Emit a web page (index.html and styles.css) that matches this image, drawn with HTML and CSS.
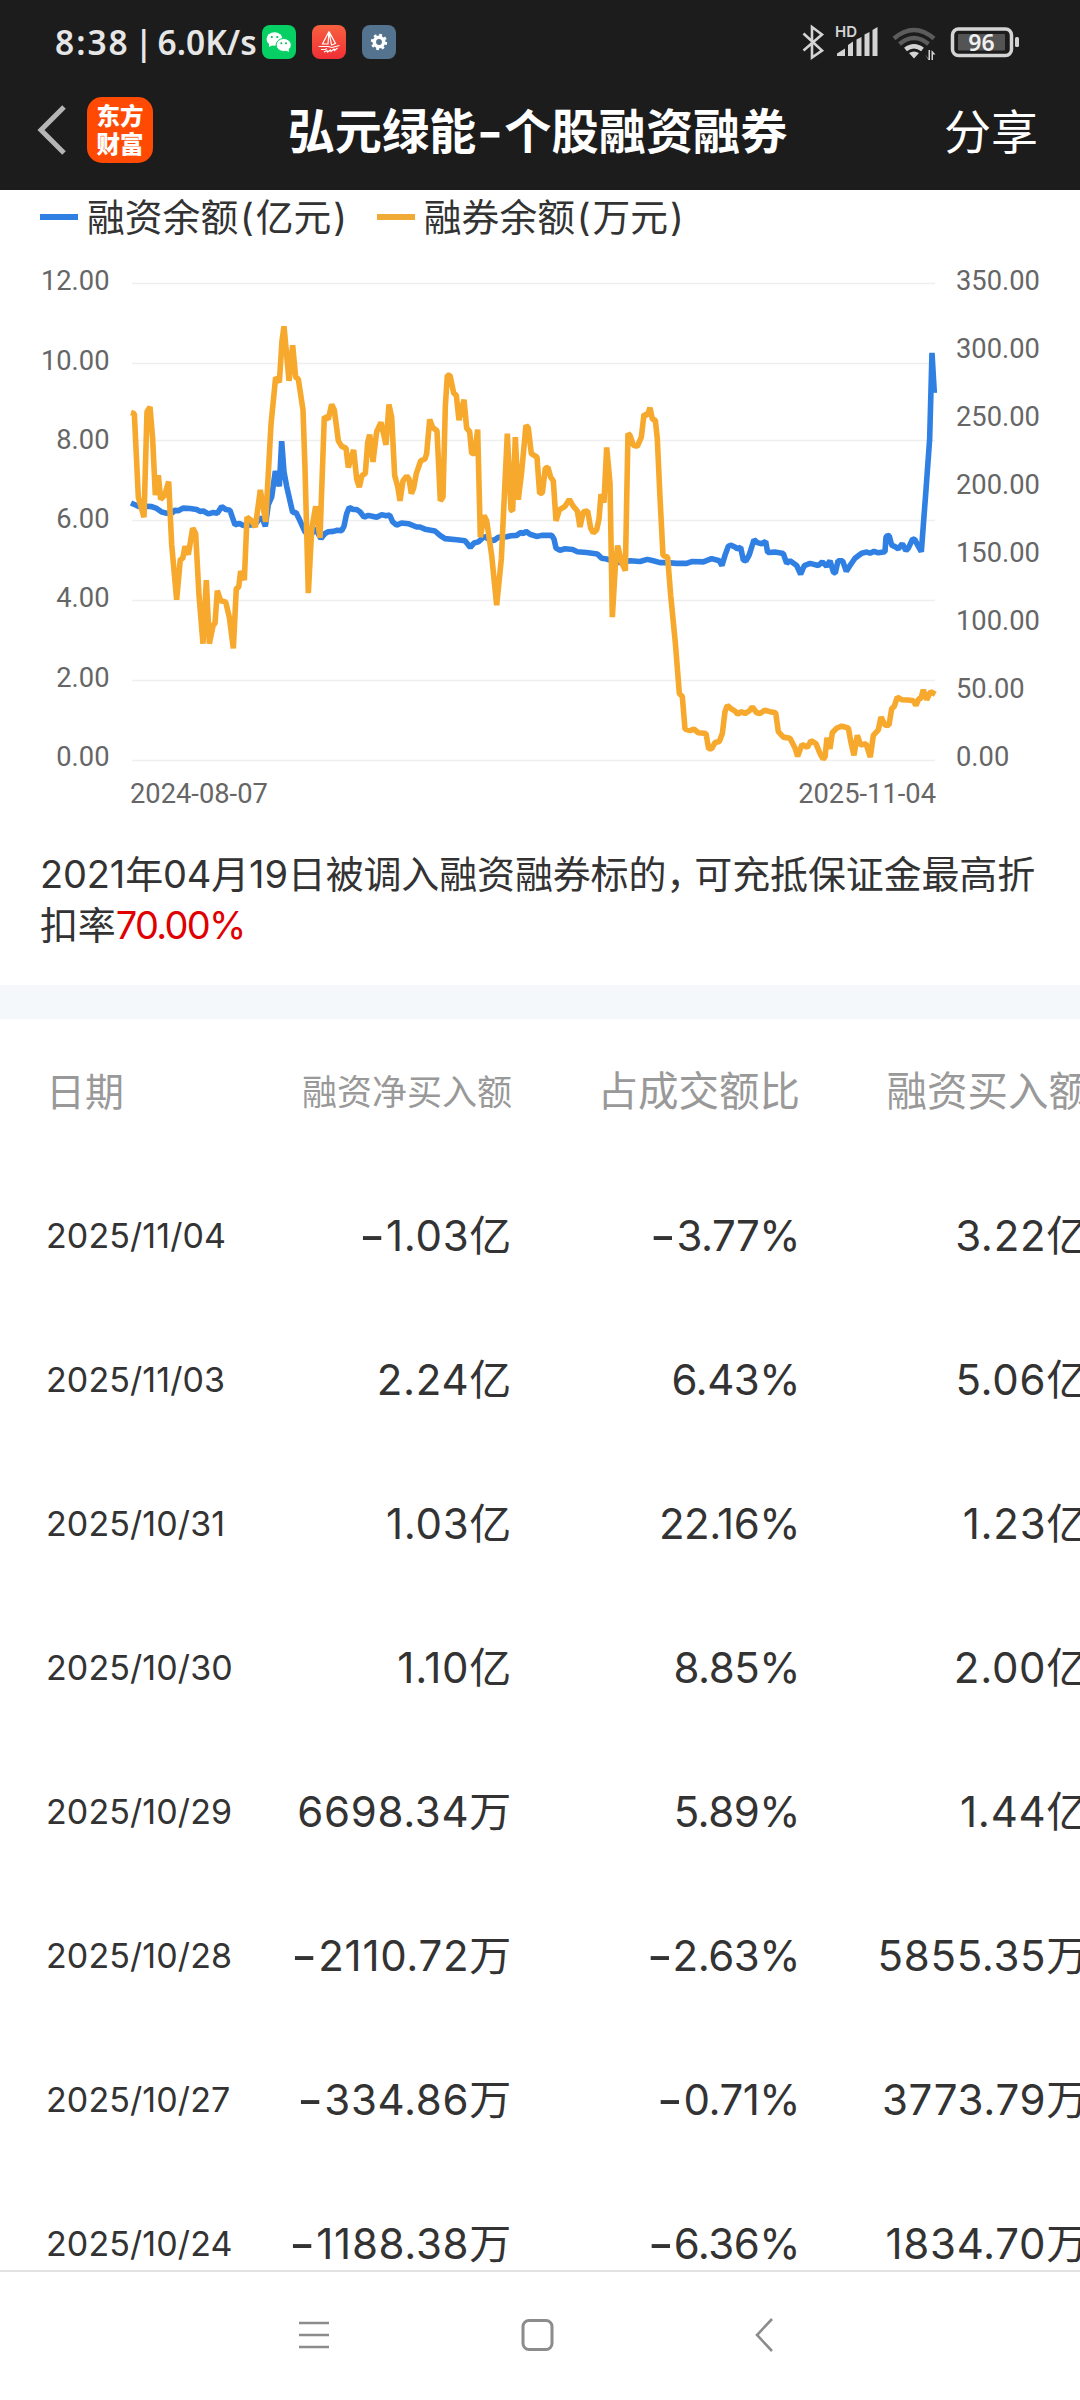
FILE: index.html
```html
<!DOCTYPE html>
<html lang="zh-CN">
<head>
<meta charset="utf-8">
<title>弘元绿能-个股融资融券</title>
<link rel="stylesheet" href="styles.css">
</head>
<body>
<div class="screen">
  <header class="top">
    <div class="status">
      <span class="clock"><span class="time">8:38</span> | 6.0K/s</span>
      <div class="apps">
        <svg class="app" viewBox="0 0 34 34"><rect width="34" height="34" rx="8" fill="#06cf63"/><ellipse cx="12.5" cy="14" rx="8" ry="6.8" fill="#fff"/><path d="M7 18l0 4 4-2z" fill="#fff"/><ellipse cx="21.7" cy="20" rx="7.6" ry="6.5" fill="#fff" stroke="#06cf63" stroke-width="1"/><path d="M23 25l4 2-.5-3.500z" fill="#fff"/><g fill="#06b858"><circle cx="9.800" cy="12" r="1.100"/><circle cx="15.300" cy="12" r="1.100"/><circle cx="19.300" cy="18.200" r="1"/><circle cx="24" cy="18.200" r="1"/></g></svg>
        <svg class="app" viewBox="0 0 34 34"><defs><linearGradient id="sail" x2="0" y2="1"><stop stop-color="#f7613f"/><stop offset="1" stop-color="#f02f36"/></linearGradient></defs><rect width="34" height="34" rx="8" fill="url(#sail)"/><path d="M17 6.500L10.500 19H16zM17 6.500L23.500 18.500 19.500 20zM6.500 21.500H16L20 22.500 27.500 20.500M9 24.500h4l2-1M12 27l3-1.500.5 1.500 3-2 .5 1.500 3-2.500.5 1.500 3-2.500" fill="none" stroke="#fff" stroke-width="1.200"/></svg>
        <svg class="app" viewBox="0 0 34 34"><rect width="34" height="34" rx="8" fill="#54738f"/><circle cx="17" cy="17" r="4.700" fill="none" stroke="#fff" stroke-width="3.600"/><circle cx="17" cy="17" r="7" fill="none" stroke="#fff" stroke-width="2.400" stroke-dasharray="2.750 2.750"/></svg>
      </div>
      <svg class="signals" viewBox="800 20 222 44">
        <path d="M803.500 33.500L822 50.500 812 57.500V27L822 34.500 803.500 50.500" fill="none" stroke="#d4d4d4" stroke-width="2.600"/>
        <text class="hd" x="835" y="37">HD</text>
        <path d="M837 56v-2.500l8-5V56zM848 56V45l5-3.500V56zM856.500 56V39.500l5-2.500v19zM864.500 56V34.500l5-2.500v24zM872.500 56V30l5-3v29z" fill="#d4d4d4"/>
        <g fill="none" stroke-width="4.500"><path d="M894 38.500q20-17 40 0" stroke="#5c5c5c"/><path d="M899.500 44q14.500-12 29 0" stroke="#5c5c5c"/><path d="M905.500 49.500q8.500-6.500 17 0" stroke="#d4d4d4"/></g>
        <path d="M909 53q5-3 10 0l-5 5.500zM925 54l3.500 5V50h1.500v10h-1.500zM931.500 60V50l4 4.500h-2.500V60z" fill="#d4d4d4"/>
        <rect x="952.500" y="29" width="59" height="26.500" rx="6" fill="none" stroke="#d4d4d4" stroke-width="3.500"/>
        <rect x="958" y="34" width="47" height="16.500" rx="1" fill="#545454"/>
        <rect x="1015" y="37" width="4" height="10" rx="1.500" fill="#d4d4d4"/>
        <text class="level" x="981.500" y="51" text-anchor="middle">96</text>
      </svg>
    </div>
    <div class="bar">
      <div class="lead">
        <svg class="back" viewBox="0 0 30 52"><path d="M27 3L4 26l23 23" fill="none" stroke="#b5b5b5" stroke-width="5"/></svg>
        <div class="brand">东方<br>财富</div>
      </div>
      <h1 class="title">弘元绿能<span class="dash">-</span>个股融资融券</h1>
      <span class="share">分享</span>
    </div>
  </header>

  <div class="legend">
    <i class="key blue"></i><span class="name">融资余额<span class="paren">(</span>亿元<span class="paren">)</span></span>
    <i class="key amber"></i><span class="name">融券余额<span class="paren">(</span>万元<span class="paren">)</span></span>
  </div>

  <svg class="chart" viewBox="0 250 1080 570">
    <path d="M132 283.500H935M132 363.500H935M132 440.500H935M132 520.500H935M132 600.500H935M132 680.500H935M132 760.500H935" stroke="#efefef" stroke-width="1.400"/>
    <g class="axis" text-anchor="end">
      <text x="109.500" y="290">12.00</text><text x="109.500" y="370">10.00</text><text x="109.500" y="449">8.00</text><text x="109.500" y="528">6.00</text><text x="109.500" y="607">4.00</text><text x="109.500" y="687">2.00</text><text x="109.500" y="766">0.00</text>
      <text x="936" y="803">2025-11-04</text>
    </g>
    <g class="axis">
      <text x="956" y="290">350.00</text><text x="956" y="358">300.00</text><text x="956" y="426">250.00</text><text x="956" y="494">200.00</text><text x="956" y="562">150.00</text><text x="956" y="630">100.00</text><text x="956" y="698">50.00</text><text x="956" y="766">0.00</text>
      <text x="130" y="803">2024-08-07</text>
    </g>
    <g class="series" transform="translate(0 250) scale(.33333 .36352)">
      <polyline stroke="#3080e4" points="393,696 410,703 425,708 440,705 455,706 470,711 485,721 500,724 520,722 522,716 535,717 550,710 570,711 590,714 600,719 610,718 625,726 640,722 652,724 665,706 678,714 690,716 697,735 705,756 718,752 730,758 745,757 765,755 780,738 788,740 796,760 805,700 815,680 826,608 838,650 845,526 852,610 860,650 870,690 878,722 888,722 900,745 915,775 930,790 945,765 963,794 975,780 985,775 1000,774 1012,771 1025,772 1032,760 1040,725 1048,708 1060,714 1070,714 1080,720 1092,735 1105,730 1120,733 1130,735 1145,728 1158,731 1169,729 1178,748 1190,757 1205,751 1225,753 1250,762 1260,762 1275,768 1305,773 1320,785 1335,794 1370,797 1395,800 1411,818 1422,806 1435,803 1453,788 1470,797 1482,799 1495,790 1520,789 1533,786 1550,785 1562,777 1570,780 1578,774 1590,782 1610,788 1625,785 1655,785 1662,795 1668,820 1680,826 1695,822 1718,824 1732,830 1760,832 1792,836 1805,848 1820,850 1840,856 1860,860 1890,855 1920,857 1942,851 1960,855 1980,860 2000,860 2030,862 2060,862 2075,857 2110,858 2135,849 2158,855 2166,868 2175,840 2185,815 2192,812 2205,817 2212,822 2222,818 2230,853 2238,855 2248,838 2262,797 2272,805 2285,808 2297,802 2303,832 2325,831 2350,835 2360,862 2370,855 2390,868 2402,892 2413,868 2430,862 2455,868 2467,858 2480,870 2490,855 2501,888 2506,888 2514,855 2528,855 2539,884 2550,868 2565,848 2585,834 2600,831 2610,834 2622,829 2635,833 2655,830 2658,790 2663,785 2668,787 2675,812 2685,816 2695,822 2707,808 2718,827 2725,820 2738,795 2745,797 2753,812 2764,830 2778,660 2789,520 2796,283 2803,393"/>
      <polyline stroke="#f7a92e" points="393,447 403,450 415,680 432,735 441,445 450,432 458,520 466,674 475,620 482,686 494,675 506,637 515,810 530,962 541,850 548,850 555,815 565,838 578,765 587,780 597,950 609,1083 619,908 628,1083 640,1030 645,1028 652,937 662,965 677,968 688,1010 700,1096 709,930 716,928 722,883 733,908 741,735 755,745 766,762 781,660 797,748 813,480 827,350 838,364 846,250 852,210 867,360 878,262 887,350 895,355 909,440 915,600 925,944 935,770 947,705 960,792 973,458 985,465 995,425 1003,440 1015,525 1025,540 1038,545 1045,598 1061,550 1070,630 1078,652 1086,620 1096,615 1103,530 1109,508 1119,583 1130,500 1143,474 1158,536 1167,425 1175,460 1184,620 1193,650 1200,690 1209,635 1220,622 1227,630 1234,670 1241,655 1249,615 1262,580 1275,575 1280,560 1289,466 1298,488 1311,497 1321,690 1329,680 1336,430 1342,345 1350,345 1361,393 1369,400 1377,468 1392,412 1400,490 1409,500 1415,560 1424,560 1433,494 1441,790 1452,730 1460,745 1475,840 1490,977 1504,850 1522,505 1533,715 1538,718 1546,515 1555,687 1565,610 1578,482 1585,490 1594,560 1611,570 1619,670 1627,668 1636,600 1644,598 1652,625 1660,635 1668,745 1678,715 1695,705 1708,686 1720,705 1732,718 1740,762 1750,720 1763,718 1772,765 1780,778 1790,770 1797,740 1803,672 1812,695 1820,543 1830,640 1837,1010 1846,870 1853,813 1865,860 1876,882 1884,505 1890,510 1900,537 1912,540 1924,515 1932,452 1942,455 1950,434 1957,465 1966,468 1972,520 1980,680 1989,840 2003,845 2012,950 2026,1080 2038,1220 2047,1228 2055,1318 2070,1322 2082,1318 2095,1328 2118,1330 2126,1372 2135,1372 2145,1355 2158,1352 2167,1330 2175,1270 2182,1253 2195,1263 2205,1268 2213,1277 2223,1270 2235,1275 2248,1268 2257,1257 2270,1273 2280,1275 2294,1266 2310,1270 2327,1273 2335,1325 2350,1340 2370,1343 2385,1370 2393,1393 2406,1360 2422,1368 2433,1350 2448,1358 2460,1385 2469,1400 2475,1395 2481,1342 2490,1372 2497,1328 2510,1315 2525,1310 2545,1315 2553,1355 2562,1390 2572,1335 2582,1362 2598,1358 2611,1395 2620,1335 2635,1320 2643,1285 2655,1307 2667,1307 2675,1262 2683,1255 2692,1230 2705,1237 2725,1238 2740,1240 2748,1253 2756,1235 2763,1233 2770,1210 2780,1237 2792,1215 2806,1222"/>
    </g>
  </svg>

  <p class="note">2021年04月19日被调入融资融券标的<span class="comma">，</span>可充抵保证金最高折扣率<span class="rate">70.00%</span></p>

  <div class="gap"></div>

  <main class="table">
    <div class="row head"><span class="h-date">日期</span><span class="h-small">融资净买入额</span><span>占成交额比</span><span>融资买入额</span></div>
    <div class="row"><span class="date">2025/11/04</span><span><b>-</b>1.03亿</span><span class="pct"><b>-</b>3.77%</span><span>3.22亿</span></div>
    <div class="row"><span class="date">2025/11/03</span><span>2.24亿</span><span class="pct">6.43%</span><span>5.06亿</span></div>
    <div class="row"><span class="date">2025/10/31</span><span>1.03亿</span><span class="pct">22.16%</span><span>1.23亿</span></div>
    <div class="row"><span class="date">2025/10/30</span><span>1.10亿</span><span class="pct">8.85%</span><span>2.00亿</span></div>
    <div class="row"><span class="date">2025/10/29</span><span>6698.34万</span><span class="pct">5.89%</span><span>1.44亿</span></div>
    <div class="row"><span class="date">2025/10/28</span><span><b>-</b>2110.72万</span><span class="pct"><b>-</b>2.63%</span><span>5855.35万</span></div>
    <div class="row"><span class="date">2025/10/27</span><span><b>-</b>334.86万</span><span class="pct"><b>-</b>0.71%</span><span>3773.79万</span></div>
    <div class="row"><span class="date">2025/10/24</span><span><b>-</b>1188.38万</span><span class="pct"><b>-</b>6.36%</span><span>1834.70万</span></div>
  </main>

  <nav class="nav">
    <svg viewBox="0 0 36 36"><path d="M3 6h30M3 18h30M3 30h30" fill="none" stroke="#8c8c8c" stroke-width="2.600"/></svg>
    <svg viewBox="0 0 36 36"><rect x="2" y="3.500" width="29" height="29" rx="6" fill="none" stroke="#8c8c8c" stroke-width="3"/></svg>
    <svg viewBox="0 0 36 36"><path d="M26 2L11 18l15 16" fill="none" stroke="#8c8c8c" stroke-width="2.600"/></svg>
  </nav>
</div>
</body>
</html>
```
FILE: styles.css
```css
* { box-sizing: border-box; }
body { margin: 0; background: #fff; }
.screen {
  width: 1080px;
  height: 2400px;
  display: flex;
  flex-direction: column;
  overflow: hidden;
  color: #333;
  font-family: Inter, "Noto Sans CJK SC", sans-serif;
}
.top { height: 190px; flex: none; background: #1c1c1c; color: #fff; }
.status { height: 76px; padding: 8px 58px 0 55px; display: flex; align-items: center; }
.clock { width: 207px; font: 600 33.500px "Noto Sans", sans-serif; color: #e6e6e6; white-space: nowrap; word-spacing: -4px; }
.time { letter-spacing: 2px; }
.apps { display: flex; gap: 16px; }
.app { width: 34px; height: 34px; display: block; }
.signals { width: 222px; height: 44px; margin-left: auto; }
.hd { font: 600 15px Inter, sans-serif; fill: #d4d4d4; }
.level { font: 600 23px "Noto Sans", sans-serif; fill: #f0f0f0; }
.bar {
  height: 108px;
  padding: 0 42px 0 37px;
  display: grid;
  grid-template-columns: 1fr auto 1fr;
  align-items: center;
}
.lead { display: flex; align-items: center; gap: 20px; }
.back { width: 30px; height: 52px; }
.brand {
  width: 66px;
  height: 66px;
  border-radius: 15px;
  background: #ff4a04;
  font: 900 23.500px/28px "Noto Sans CJK SC", sans-serif;
  text-align: center;
  padding-top: 4px;
}
.title { margin: 3px 0 0; font-size: 47.200px; font-weight: 700; line-height: 60px; white-space: nowrap; }
.share { margin-top: 3px; justify-self: end; font-size: 47px; line-height: 60px; }
.dash { display: inline-block; width: 28px; text-align: center; transform: scaleX(1.2); }
.legend { height: 53px; flex: none; padding-left: 40px; display: flex; align-items: center; }
.key { width: 38px; height: 6px; margin-right: 9px; }
.blue { background: #3080e4; }
.amber { background: #f0aa36; }
.name { font-size: 37.800px; line-height: 50px; margin-right: 28px; white-space: nowrap; }
.paren { display: inline-block; width: 17.500px; text-align: center; }
.chart { width: 1080px; height: 570px; flex: none; margin-top: 7px; display: block; }
.axis text { font: 27.300px Roboto, sans-serif; fill: #666; }
.series polyline { fill: none; stroke-width: 5.600px; stroke-linejoin: bevel; vector-effect: non-scaling-stroke; }
.note { margin: 29px 30px 0 40px; height: 136px; flex: none; font-size: 38px; line-height: 51px; letter-spacing: -.15px; word-break: break-all; }
.comma { letter-spacing: -10px; }
.rate { color: #e00000; letter-spacing: -1.700px; }
.gap { height: 34px; flex: none; background: #f5f8fa; }
.table { height: 1251px; flex: none; padding-top: 1px; overflow: hidden; }
.row {
  height: 144px;
  width: 1090px;
  padding-left: 46px;
  display: grid;
  grid-template-columns: 178px 288px 288px 289px;
  align-items: center;
  font-size: 42px;
  line-height: 60px;
  letter-spacing: .7px;
  text-align: right;
  white-space: nowrap;
}
.row .pct { letter-spacing: -.5px; }
.row .date { text-align: left; font-size: 34px; letter-spacing: .1px; }
.row b { display: inline-block; width: 27px; font-weight: 500; text-align: center; transform: scaleX(1.350); }
.head { color: #999; font-size: 40.500px; letter-spacing: 0; }
.row .h-date { text-align: left; font-size: 39px; }
.row .h-small { font-size: 35px; }
.nav {
  flex: 1;
  border-top: 2px solid #e2e2e2;
  padding: 0 298px 2px 296px;
  display: flex;
  justify-content: space-between;
  align-items: center;
}
.nav svg { width: 36px; height: 36px; }
```
